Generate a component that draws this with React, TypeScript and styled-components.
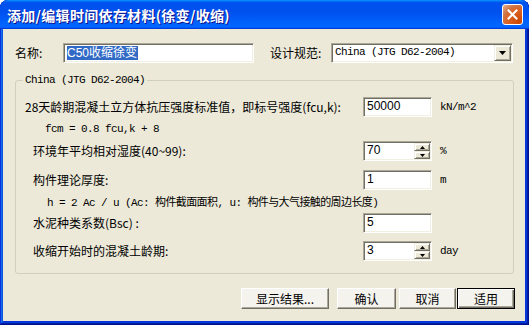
import React from 'react';
import styled, { createGlobalStyle } from 'styled-components';

const CJK = `"Noto Sans CJK SC", "Noto Sans", sans-serif`;
const MONO = `"Liberation Mono", "Noto Sans CJK SC", monospace`;
const SANS = `"Liberation Sans", "Noto Sans CJK SC", sans-serif`;

const GlobalStyle = createGlobalStyle`
  html, body {
    margin: 0;
    padding: 0;
    background: #ffffff;
  }
  body {
    width: 529px;
    height: 325px;
    overflow: hidden;
  }
`;

const Window = styled.div`
  width: 529px;
  height: 325px;
  box-sizing: border-box;
  display: flex;
  flex-direction: column;
  background: #0831d9;
  border-radius: 8px 8px 0 0;
  box-shadow: inset -1px -1px #00138c, inset 1px 1px #0831d9,
    inset -2px -2px #001ea0, inset 2px 2px #166aee,
    inset -3px -3px #003bda, inset 3px 3px #0855dd;
  overflow: hidden;
  font-family: ${CJK};
  font-size: 12px;
  color: #000;
`;

const TitleBar = styled.div`
  flex: 0 0 29px;
  display: flex;
  align-items: center;
  padding: 0 6px 0 7px;
  border-radius: 8px 8px 0 0;
  background: linear-gradient(
    180deg,
    #0997ff,
    #0053ee 8%,
    #0050ee 40%,
    #0066ff 88%,
    #0066ff 93%,
    #005bff 95%,
    #003dd7 96%,
    #003dd7
  );
`;

const Title = styled.div`
  color: #fff;
  font-weight: bold;
  font-size: 14px;
  line-height: 16px;
  letter-spacing: 0.3px;
  text-shadow: 1px 1px #0f1089;
`;

const CloseButton = styled.div`
  margin-left: auto;
  width: 21px;
  height: 21px;
  box-sizing: border-box;
  border: 1px solid #fff;
  border-radius: 3px;
  display: flex;
  align-items: center;
  justify-content: center;
  background: radial-gradient(circle at 90% 90%, #cc4600 0%, #dc6527 55%, #cd7546 70%, #e8a684 95%);
`;

const Client = styled.div`
  flex: 1;
  margin: 0 4px 4px 3px;
  background: #ece9d8;
  padding: 14px 11px 0 12px;
  display: flex;
  flex-direction: column;
`;

const TopRow = styled.div`
  display: flex;
  align-items: center;
  height: 20px;
`;

const Label = styled.div<{ $width?: number }>`
  ${(p) => (p.$width ? `width: ${p.$width}px; flex: 0 0 ${p.$width}px;` : '')}
  line-height: 16px;
  white-space: nowrap;
`;

const Sunken = styled.div<{ $width: number }>`
  width: ${(p) => p.$width}px;
  height: 20px;
  box-sizing: border-box;
  flex: 0 0 auto;
  display: flex;
  background: #fff;
  border-top: 1px solid #aca899;
  border-left: 1px solid #aca899;
  border-right: 1px solid #fff;
  border-bottom: 1px solid #fff;
  box-shadow: inset 1px 1px #716f64, inset -1px -1px #f1efe2;
`;

const Value = styled.div`
  flex: 1;
  padding: 2px 0 0 3px;
  font-family: ${SANS};
  font-size: 12px;
  line-height: 13px;
  white-space: nowrap;
  overflow: hidden;
`;

const Selected = styled.span`
  background: #316ac5;
  color: #fff;
  font-family: ${SANS};
  font-size: 12px;
  line-height: 14px;
  display: inline-block;
  padding: 0 1px 0 0;
`;

const ComboText = styled.div`
  flex: 1;
  padding: 0 0 0 3px;
  font-family: ${MONO};
  font-size: 11px;
  letter-spacing: -0.6px;
  line-height: 17px;
  white-space: nowrap;
`;

const Raised = styled.div`
  box-sizing: border-box;
  background: #ece9d8;
  border-top: 1px solid #f1efe2;
  border-left: 1px solid #f1efe2;
  border-right: 1px solid #716f64;
  border-bottom: 1px solid #716f64;
  box-shadow: inset 1px 1px #fff, inset -1px -1px #aca899;
  display: flex;
  align-items: center;
  justify-content: center;
`;

const DropButton = styled(Raised)`
  width: 17px;
  height: 16px;
  margin: 1px 1px 1px 0;
`;

const SpinColumn = styled.div`
  width: 16px;
  display: flex;
  flex-direction: column;
  margin: 1px 1px 1px 0;
`;

const SpinButton = styled(Raised)`
  flex: 1;
`;

const Group = styled.div`
  position: relative;
  margin-top: 17px;
  border: 1px solid #d0d0bf;
  border-radius: 3px;
  padding: 16px 0 12px 9px;
  display: flex;
  flex-direction: column;
`;

const GroupTitle = styled.div`
  position: absolute;
  top: -8px;
  left: 7px;
  padding: 0 2px;
  background: #ece9d8;
  font-family: ${MONO};
  font-size: 11px;
  letter-spacing: -0.6px;
  line-height: 14px;
  white-space: nowrap;
`;

const Row = styled.div<{ $top: number; $indent: number }>`
  display: grid;
  grid-template-columns: 1fr 69px 81px;
  align-items: center;
  height: 20px;
  margin-top: ${(p) => p.$top}px;
  padding-left: ${(p) => p.$indent}px;
`;

const Unit = styled.div`
  padding-left: 8px;
  font-family: ${MONO};
  font-size: 11px;
  letter-spacing: -0.6px;
  line-height: 14px;
  white-space: nowrap;
`;

const Note = styled.div<{ $top: number; $indent: number }>`
  height: 16px;
  line-height: 16px;
  margin-top: ${(p) => p.$top}px;
  padding-left: ${(p) => p.$indent}px;
  font-family: ${MONO};
  font-size: 11px;
  letter-spacing: -0.6px;
  white-space: nowrap;
`;

const ButtonRow = styled.div`
  display: flex;
  justify-content: flex-end;
  margin: 14px -1px 0 0;
`;

const Button = styled.div<{ $width: number; $gap: number; $default?: boolean }>`
  width: ${(p) => p.$width}px;
  height: 21px;
  margin-left: ${(p) => p.$gap}px;
  box-sizing: border-box;
  display: flex;
  align-items: center;
  justify-content: center;
  background: #f4f3ee;
  border: 1px solid;
  border-color: ${(p) => (p.$default ? '#000' : '#fff #716f64 #716f64 #fff')};
  box-shadow: ${(p) =>
    p.$default
      ? 'inset 1px 1px #fff, inset -1px -1px #716f64, inset -2px -2px #aca899'
      : 'inset -1px -1px #aca899'};
  line-height: 16px;
  white-space: nowrap;
`;

const Down = () => (
  <svg width="7" height="4" viewBox="0 0 7 4">
    <path d="M0 0h7L3.5 4z" fill="#000" />
  </svg>
);

const TinyUp = () => (
  <svg width="5" height="3" viewBox="0 0 5 3">
    <path d="M2.5 0L5 3H0z" fill="#000" />
  </svg>
);

const TinyDown = () => (
  <svg width="5" height="3" viewBox="0 0 5 3">
    <path d="M0 0h5L2.5 3z" fill="#000" />
  </svg>
);

const Edit = ({ value, spin }: { value: string; spin?: boolean }) => (
  <Sunken $width={69}>
    <Value>{value}</Value>
    {spin && (
      <SpinColumn>
        <SpinButton>
          <TinyUp />
        </SpinButton>
        <SpinButton>
          <TinyDown />
        </SpinButton>
      </SpinColumn>
    )}
  </Sunken>
);

export default function App() {
  return (
    <>
      <GlobalStyle />
      <Window>
        <TitleBar>
          <Title>添加/编辑时间依存材料(徐变/收缩)</Title>
          <CloseButton>
            <svg width="11" height="11" viewBox="0 0 11 11">
              <path d="M1.5 1.5l8 8M9.5 1.5l-8 8" stroke="#fff" strokeWidth="2" strokeLinecap="square" />
            </svg>
          </CloseButton>
        </TitleBar>
        <Client>
          <TopRow>
            <Label $width={48}>名称:</Label>
            <Sunken $width={191}>
              <Value>
                <Selected>C50收缩徐变</Selected>
              </Value>
            </Sunken>
            <Label $width={61} style={{ marginLeft: 16 }}>
              设计规范:
            </Label>
            <Sunken $width={182}>
              <ComboText>China (JTG D62-2004)</ComboText>
              <DropButton>
                <Down />
              </DropButton>
            </Sunken>
          </TopRow>

          <Group>
            <GroupTitle>China (JTG D62-2004)</GroupTitle>
            <Row $top={0} $indent={0}>
              <Label>28天龄期混凝土立方体抗压强度标准值，即标号强度(fcu,k):</Label>
              <Edit value="50000" />
              <Unit>kN/m^2</Unit>
            </Row>
            <Note $top={4} $indent={20}>
              fcm = 0.8 fcu,k + 8
            </Note>
            <Row $top={4} $indent={8}>
              <Label>环境年平均相对湿度(40~99):</Label>
              <Edit value="70" spin />
              <Unit>%</Unit>
            </Row>
            <Row $top={9} $indent={8}>
              <Label>构件理论厚度:</Label>
              <Edit value="1" />
              <Unit>m</Unit>
            </Row>
            <Note $top={5} $indent={22}>
              h = 2 Ac / u (Ac: 构件截面面积, u: 构件与大气接触的周边长度)
            </Note>
            <Row $top={2} $indent={8}>
              <Label>水泥种类系数(Bsc) :</Label>
              <Edit value="5" />
              <Unit />
            </Row>
            <Row $top={8} $indent={8}>
              <Label>收缩开始时的混凝土龄期:</Label>
              <Edit value="3" spin />
              <Unit>day</Unit>
            </Row>
          </Group>

          <ButtonRow>
            <Button $width={88} $gap={0}>
              显示结果...
            </Button>
            <Button $width={59} $gap={8}>
              确认
            </Button>
            <Button $width={57} $gap={3}>
              取消
            </Button>
            <Button $width={58} $gap={1} $default>
              适用
            </Button>
          </ButtonRow>
        </Client>
      </Window>
    </>
  );
}
